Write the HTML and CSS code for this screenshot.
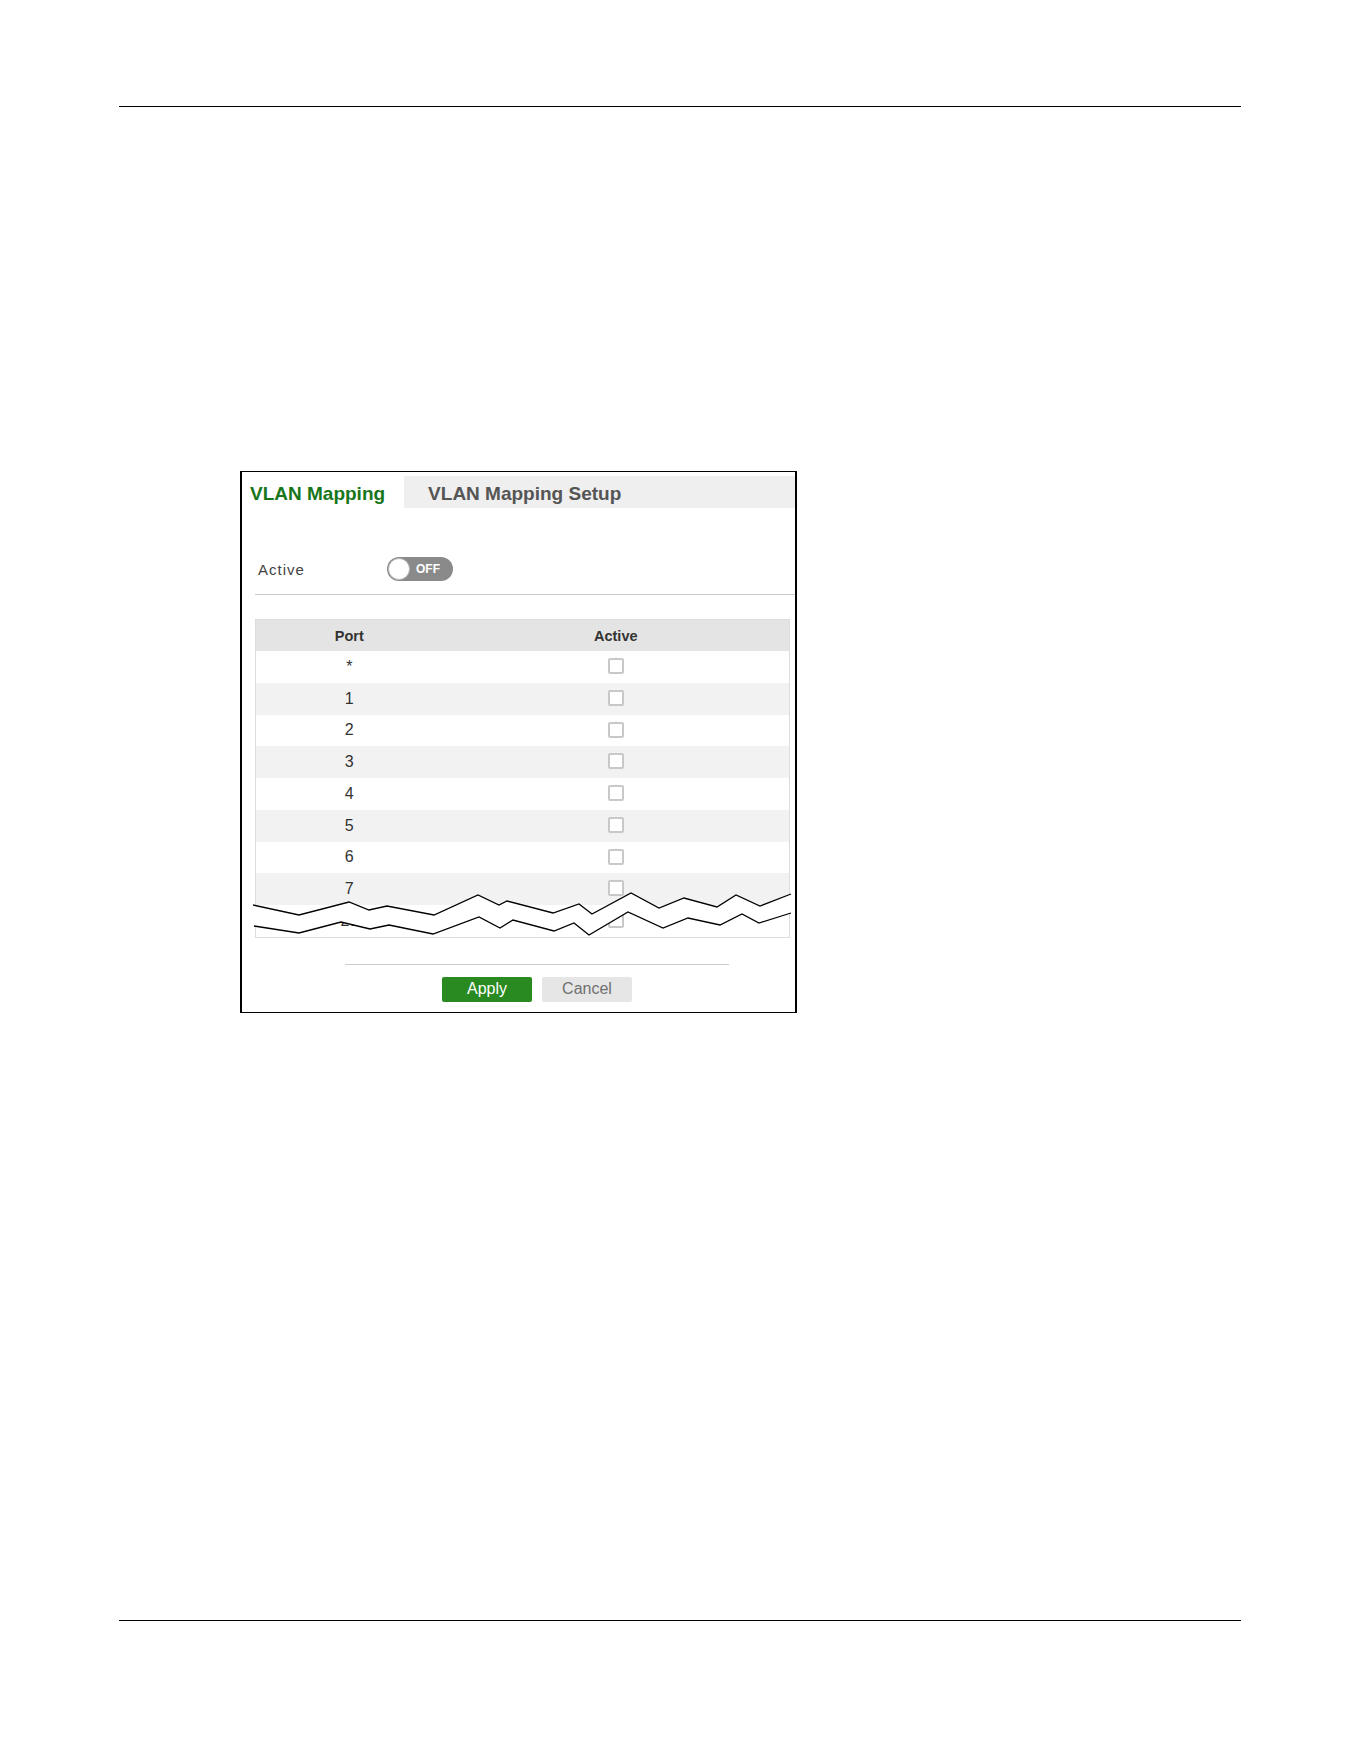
FILE: index.html
```html
<!DOCTYPE html>
<html>
  <head>
    <title>VLAN Mapping</title>
    <link rel="stylesheet" href="styles.css">
  </head>
  <body>
    <div class="page-rule rule-top"></div>

    <div class="figure">
      <div class="tabs">
        <div class="tab tab-active">VLAN Mapping</div>
        <div class="tab">VLAN Mapping Setup</div>
      </div>

      <div class="panel">
        <div class="field">
          <span class="field-label">Active</span>
          <span class="switch">
            <span class="knob"></span>
            <span class="switch-text">OFF</span>
          </span>
        </div>

        <div class="table-wrap">
          <table class="port-table">
            <thead>
              <tr>
                <th class="col-port">Port</th>
                <th>Active</th>
              </tr>
            </thead>
            <tbody>
              <tr><td>*</td><td><span class="check"></span></td></tr>
              <tr><td>1</td><td><span class="check"></span></td></tr>
              <tr><td>2</td><td><span class="check"></span></td></tr>
              <tr><td>3</td><td><span class="check"></span></td></tr>
              <tr><td>4</td><td><span class="check"></span></td></tr>
              <tr><td>5</td><td><span class="check"></span></td></tr>
              <tr><td>6</td><td><span class="check"></span></td></tr>
              <tr><td>7</td><td><span class="check"></span></td></tr>
              <tr><td>28</td><td><span class="check"></span></td></tr>
            </tbody>
          </table>

          <!-- torn edge: rows 8 to 27 are cut out -->
          <svg class="tear" width="540" height="60" viewBox="0 0 540 60">
            <polygon fill="#fff" points="0,19 46,29 96,16 116,24 134,20 181,29 225,9 246,19 254,15 300,27 326,18 339,28 378,7 406,22 431,12 464,21 483,9 507,20 538,8 538,27 506,37 489,28 467,39 435,32 410,42 375,26 336,49 321,37 301,45 260,34 247,42 226,31 180,48 136,39 117,43 88,36 46,47 1,40" />
            <polyline fill="none" stroke="#000" stroke-width="1.3" points="0,19 46,29 96,16 116,24 134,20 181,29 225,9 246,19 254,15 300,27 326,18 339,28 378,7 406,22 431,12 464,21 483,9 507,20 538,8" />
            <polyline fill="none" stroke="#000" stroke-width="1.3" points="1,40 46,47 88,36 117,43 136,39 180,48 226,31 247,42 260,34 301,45 321,37 336,49 375,26 410,42 435,32 467,39 489,28 506,37 538,27" />
          </svg>
        </div>

        <div class="actions">
          <button class="btn btn-apply">Apply</button>
          <button class="btn btn-cancel">Cancel</button>
        </div>
      </div>
    </div>

    <div class="page-rule rule-bottom"></div>
  </body>
</html>
```

FILE: styles.css
```css
body {
  margin: 0;
  background: #fff;
  font-family: "Liberation Sans", Arial, sans-serif;
  color: #333;
}

.page-rule {
  width: 1122px;
  margin-left: 119px;
  border-top: 1px solid #000;
}

.rule-top {
  margin-top: 106px;
}

.rule-bottom {
  margin-top: 607px;
}

/* framed screen capture */
.figure {
  box-sizing: border-box;
  width: 557px;
  margin: 364px 0 0 240px;
  padding: 4px 0 10px;
  border: 1px solid #000;
  border-left-width: 2px;
  border-right-width: 2px;
}

.tabs {
  display: flex;
  height: 32px;
  background: #efefef;
}

.tab {
  display: flex;
  align-items: center;
  padding: 3px 0 0 24px;
  font-size: 19px;
  font-weight: bold;
  color: #555;
}

.tab-active {
  padding: 3px 19px 0 8px;
  background: #fff;
  color: #17761b;
}

.panel {
  padding-left: 13px;
}

.field {
  display: flex;
  align-items: center;
  height: 24px;
  margin-top: 49px;
  padding-bottom: 13px;
  border-bottom: 1px solid #ccc;
}

.field-label {
  width: 129px;
  padding-left: 3px;
  font-size: 15px;
  letter-spacing: 1px;
  color: #444;
}

.switch {
  display: flex;
  align-items: center;
  width: 66px;
  height: 24px;
  border-radius: 12px;
  background: #8a8a8a;
}

.knob {
  box-sizing: border-box;
  width: 22px;
  height: 22px;
  margin-left: 1px;
  border-radius: 50%;
  border: 1px solid #bbb;
  background: #fff;
}

.switch-text {
  margin-left: 6px;
  font-size: 12px;
  font-weight: bold;
  color: #fff;
}

.table-wrap {
  position: relative;
  margin: 24px 5px 0 0;
  border: 1px solid #ddd;
}

.port-table {
  width: 100%;
  border-spacing: 0;
}

.port-table th,
.port-table td {
  padding: 0;
  text-align: center;
  vertical-align: middle;
}

.port-table th {
  height: 31px;
  background: #e4e4e4;
  font-size: 14.5px;
  font-weight: bold;
  color: #333;
}

.port-table .col-port {
  width: 35%;
}

.port-table td {
  height: 31.75px;
  font-size: 16px;
  color: #333;
}

.port-table tbody tr:nth-child(even) td {
  background: #f2f2f2;
}

.check {
  display: inline-block;
  box-sizing: border-box;
  width: 16px;
  height: 16px;
  margin-top: -3px;
  vertical-align: middle;
  border: 2px solid #c8c8c8;
  border-radius: 2px;
  background: #fff;
}

.tear {
  position: absolute;
  left: -3px;
  top: 266px;
}

.actions {
  display: flex;
  justify-content: center;
  gap: 10px;
  margin: 26px 66px 0 90px;
  padding-top: 12px;
  border-top: 1px solid #ccc;
}

.btn {
  width: 90px;
  height: 25px;
  padding: 0;
  border: none;
  border-radius: 2px;
  font-family: "Liberation Sans", Arial, sans-serif;
  font-size: 16px;
}

.btn-apply {
  background: #288a20;
  color: #fff;
}

.btn-cancel {
  background: #e6e6e6;
  color: #707070;
}
```
